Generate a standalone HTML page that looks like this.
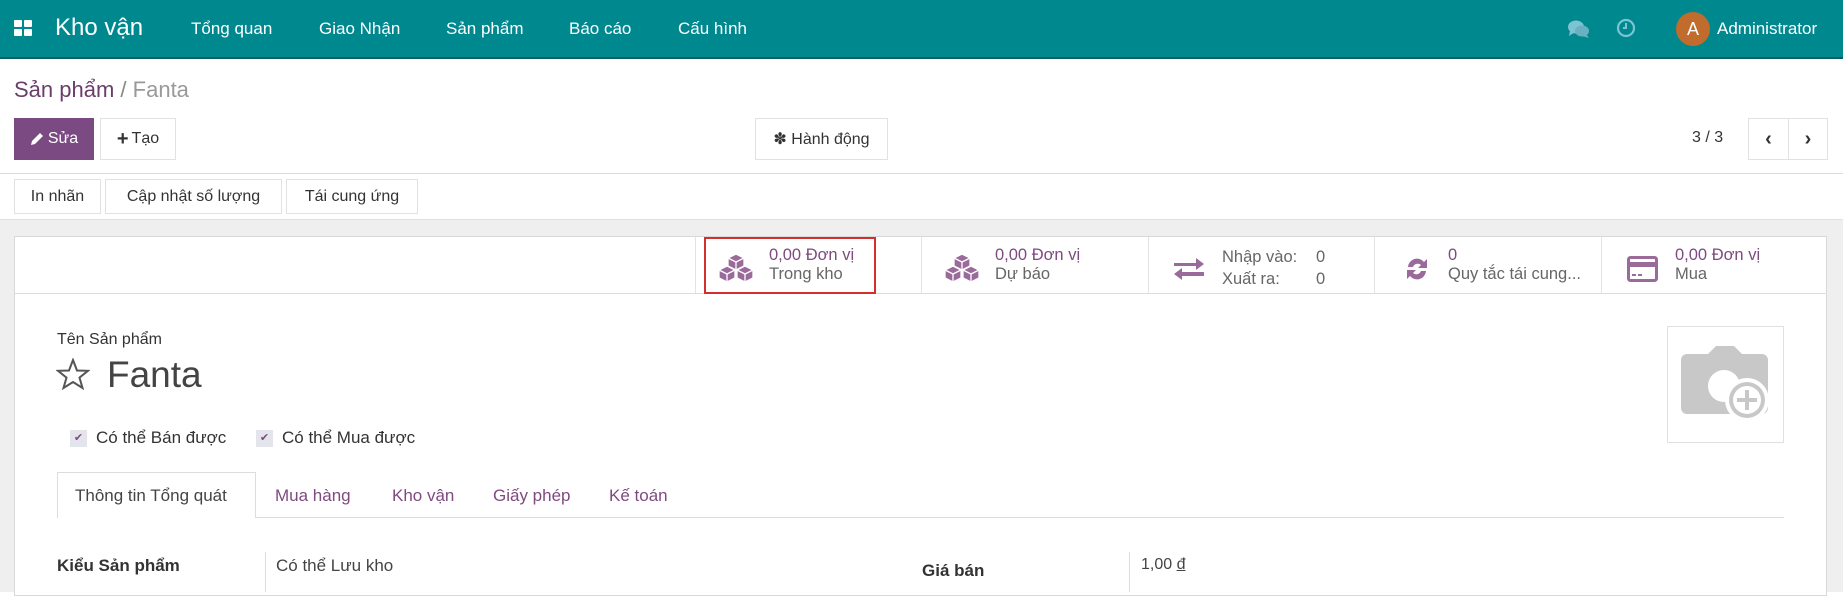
<!DOCTYPE html>
<html><head><meta charset="utf-8"><style>
*{box-sizing:border-box;margin:0;padding:0}
body{width:1843px;height:592px;overflow:hidden;background:#fff;font-family:"Liberation Sans",sans-serif;color:#4c4c4c;position:relative}
.a{position:absolute;white-space:nowrap}
.nav{position:absolute;left:0;top:0;width:1843px;height:59px;background:#00888f;border-bottom:2px solid #0a5e63}
.nav .a{color:#fff;font-size:17px;top:19px}
.btn{position:absolute;border:1px solid #e2e2e2;background:#fff;font-size:16px;color:#333;display:flex;align-items:center;justify-content:center}
.pur{color:#7e4a7f}
.st{font-size:16.5px;color:#666}
</style></head><body>
<div class="nav">
 <svg class="a" style="left:14px;top:20px" width="19" height="17" viewBox="0 0 19 17"><rect x="0" y="0" width="8" height="7" rx="1" fill="#fff"/><rect x="10" y="0" width="8" height="7" rx="1" fill="#fff"/><rect x="0" y="9" width="8" height="7" rx="1" fill="#fff"/><rect x="10" y="9" width="8" height="7" rx="1" fill="#fff"/></svg>
 <div class="a" style="left:55px;top:14px;font-size:24px">Kho vận</div>
 <div class="a" style="left:191px">Tổng quan</div>
 <div class="a" style="left:319px">Giao Nhận</div>
 <div class="a" style="left:446px">Sản phẩm</div>
 <div class="a" style="left:569px">Báo cáo</div>
 <div class="a" style="left:678px">Cấu hình</div>
 <svg class="a" style="left:1567px;top:19px" width="24" height="20" viewBox="0 0 24 20"><ellipse cx="9" cy="8" rx="8" ry="6.5" fill="#7cc3d3"/><path d="M3 12 L2 17 L8 13Z" fill="#7cc3d3"/><ellipse cx="15" cy="12" rx="7" ry="5.5" fill="#6bb0c0"/><path d="M19 15 L22 19 L15 17Z" fill="#6bb0c0"/></svg>
 <svg class="a" style="left:1616px;top:18px" width="20" height="20" viewBox="0 0 20 20"><circle cx="10" cy="10" r="8" fill="none" stroke="#7cc3d3" stroke-width="2.2"/><path d="M10 5 V10 H7" fill="none" stroke="#7cc3d3" stroke-width="2"/></svg>
 <div class="a" style="left:1676px;top:12px;width:34px;height:34px;border-radius:50%;background:#c16b2c;font-size:18px;text-align:center;line-height:34px;color:#fff">A</div>
 <div class="a" style="left:1717px">Administrator</div>
</div>
<div class="a pur" style="left:14px;top:77px;font-size:22px;color:#6b3e6a">Sản phẩm <span style="color:#888">/</span> <span style="color:#999">Fanta</span></div>
<div class="btn" style="left:14px;top:118px;width:80px;height:42px;background:#7c4a82;border-color:#7c4a82;color:#fff"><svg width="14" height="14" viewBox="0 0 14 14" style="margin-right:4px"><path d="M10 1 L13 4 L5 12 L1 13 L2 9Z" fill="#fff"/></svg>Sửa</div>
<div class="btn" style="left:100px;top:118px;width:76px;height:42px"><b style="font-size:20px;margin-right:3px">+</b>Tạo</div>
<div class="btn" style="left:755px;top:118px;width:133px;height:42px">✽ Hành động</div>
<div class="a" style="left:1692px;top:129px;font-size:16px;color:#333">3 / 3</div>
<div class="btn" style="left:1748px;top:118px;width:41px;height:42px;font-weight:bold;font-size:20px">‹</div>
<div class="btn" style="left:1788px;top:118px;width:40px;height:42px;font-weight:bold;font-size:20px">›</div>
<div class="a" style="left:0;top:173px;width:1843px;height:1px;background:#dcdcdc"></div>
<div class="btn" style="left:14px;top:179px;width:87px;height:35px">In nhãn</div>
<div class="btn" style="left:105px;top:179px;width:177px;height:35px">Cập nhật số lượng</div>
<div class="btn" style="left:286px;top:179px;width:132px;height:35px">Tái cung ứng</div>
<div class="a" style="left:0;top:219px;width:1843px;height:373px;background:#efefef;border-top:1px solid #e0e0e0"></div>
<div class="a" style="left:14px;top:236px;width:1813px;height:360px;background:#fff;border:1px solid #d8d8d8"></div>
<div class="a" style="left:14px;top:293px;width:1813px;height:1px;background:#ddd"></div>
<div class="a" style="left:695px;top:237px;width:1px;height:56px;background:#e3e3e3"></div>
<div class="a" style="left:921px;top:237px;width:1px;height:56px;background:#e3e3e3"></div>
<div class="a" style="left:1148px;top:237px;width:1px;height:56px;background:#e3e3e3"></div>
<div class="a" style="left:1374px;top:237px;width:1px;height:56px;background:#e3e3e3"></div>
<div class="a" style="left:1601px;top:237px;width:1px;height:56px;background:#e3e3e3"></div>
<div class="a" style="left:704px;top:237px;width:172px;height:57px;border:2px solid #d32f2f"></div>
<svg class="a" style="left:717px;top:253px" width="38" height="30" viewBox="0 0 38 30"><g fill="#9a6a9b" stroke="#fff" stroke-width="1.3" stroke-linejoin="round"><path d="M19 1 L27 5 L27 13 L19 17 L11 13 L11 5Z"/><path d="M11 5 L19 9 L27 5 M19 9 V17"/><path d="M10 13 L18 17 L18 25 L10 29 L2 25 L2 17Z"/><path d="M2 17 L10 21 L18 17 M10 21 V29"/><path d="M28 13 L36 17 L36 25 L28 29 L20 25 L20 17Z"/><path d="M20 17 L28 21 L36 17 M28 21 V29"/></g></svg>
<div class="a st" style="left:769px;top:246px"><span class="pur">0,00 Đơn vị</span><br>Trong kho</div>
<svg class="a" style="left:943px;top:253px" width="38" height="30" viewBox="0 0 38 30"><g fill="#9a6a9b" stroke="#fff" stroke-width="1.3" stroke-linejoin="round"><path d="M19 1 L27 5 L27 13 L19 17 L11 13 L11 5Z"/><path d="M11 5 L19 9 L27 5 M19 9 V17"/><path d="M10 13 L18 17 L18 25 L10 29 L2 25 L2 17Z"/><path d="M2 17 L10 21 L18 17 M10 21 V29"/><path d="M28 13 L36 17 L36 25 L28 29 L20 25 L20 17Z"/><path d="M20 17 L28 21 L36 17 M28 21 V29"/></g></svg>
<div class="a st" style="left:995px;top:246px"><span class="pur">0,00 Đơn vị</span><br>Dự báo</div>
<svg class="a" style="left:1174px;top:258px" width="30" height="22" viewBox="0 0 30 22"><path d="M0 5 H22 V0 L30 6 L22 12 V8 H0Z M30 14 H8 V10 L0 16 L8 22 V18 H30Z" fill="#9a6a9b"/></svg>
<div class="a st" style="left:1222px;top:246px;line-height:22px">Nhập vào:<br>Xuất ra:</div>
<div class="a st pur" style="left:1316px;top:246px;line-height:22px">0<br>0</div>
<svg class="a" style="left:1404px;top:255px" width="26" height="28" viewBox="0 0 26 28"><path d="M4 12 A9 9 0 0 1 20 7 L23 4 V13 H14 L17 10 A5 5 0 0 0 9 12Z M22 16 A9 9 0 0 1 6 21 L3 24 V15 H12 L9 18 A5 5 0 0 0 17 16Z" fill="#9a6a9b"/></svg>
<div class="a st" style="left:1448px;top:246px"><span class="pur">0</span><br>Quy tắc tái cung...</div>
<svg class="a" style="left:1627px;top:256px" width="31" height="26" viewBox="0 0 31 26"><rect x="1.5" y="1.5" width="28" height="23" rx="2" fill="none" stroke="#9a6a9b" stroke-width="3"/><rect x="1" y="6" width="29" height="5" fill="#9a6a9b"/><rect x="5" y="18" width="4" height="2" fill="#9a6a9b"/><rect x="11" y="18" width="4" height="2" fill="#9a6a9b"/></svg>
<div class="a st" style="left:1675px;top:246px"><span class="pur">0,00 Đơn vị</span><br>Mua</div>
<div class="a" style="left:57px;top:331px;font-size:16px;color:#333">Tên Sản phẩm</div>
<svg class="a" style="left:56px;top:358px" width="34" height="32" viewBox="0 0 34 32"><path d="M17 2 L21 12.5 L32 12.8 L23.5 19.6 L26.5 30 L17 24 L7.5 30 L10.5 19.6 L2 12.8 L13 12.5Z" fill="none" stroke="#555" stroke-width="2"/></svg>
<div class="a" style="left:107px;top:354px;font-size:37px;color:#444">Fanta</div>
<div class="a" style="left:70px;top:430px;width:17px;height:17px;background:#e4e4ec;font-size:11px;color:#7e4a7f;text-align:center;line-height:17px">✔</div>
<div class="a" style="left:96px;top:428px;font-size:17px;color:#333">Có thể Bán được</div>
<div class="a" style="left:256px;top:430px;width:17px;height:17px;background:#e4e4ec;font-size:11px;color:#7e4a7f;text-align:center;line-height:17px">✔</div>
<div class="a" style="left:282px;top:428px;font-size:17px;color:#333">Có thể Mua được</div>
<div class="a" style="left:57px;top:517px;width:1727px;height:1px;background:#ddd"></div>
<div class="a" style="left:57px;top:472px;width:199px;height:46px;border:1px solid #ddd;border-bottom:none;background:#fff"></div>
<div class="a" style="left:75px;top:486px;font-size:17px;color:#444">Thông tin Tổng quát</div>
<div class="a pur" style="left:275px;top:486px;font-size:17px">Mua hàng</div>
<div class="a pur" style="left:392px;top:486px;font-size:17px">Kho vận</div>
<div class="a pur" style="left:493px;top:486px;font-size:17px">Giấy phép</div>
<div class="a pur" style="left:609px;top:486px;font-size:17px">Kế toán</div>
<div class="a" style="left:57px;top:556px;font-size:17px;font-weight:bold;color:#333">Kiểu Sản phẩm</div>
<div class="a" style="left:265px;top:552px;width:1px;height:40px;background:#ddd"></div>
<div class="a" style="left:276px;top:556px;font-size:17px;color:#444">Có thể Lưu kho</div>
<div class="a" style="left:922px;top:561px;font-size:17px;font-weight:bold;color:#333">Giá bán</div>
<div class="a" style="left:1129px;top:552px;width:1px;height:40px;background:#ddd"></div>
<div class="a" style="left:1141px;top:556px;font-size:16px;color:#444">1,00 <u>đ</u></div>
<div class="a" style="left:1667px;top:326px;width:117px;height:117px;border:1px solid #e0e0e0"></div>
<svg class="a" style="left:1680px;top:346px" width="92" height="80" viewBox="0 0 92 80"><path d="M28 8 L36 0 H54 L62 8 H82 A6 6 0 0 1 88 14 V62 A6 6 0 0 1 82 68 H7 A6 6 0 0 1 1 62 V14 A6 6 0 0 1 7 8Z" fill="#c8c8c8"/><circle cx="44" cy="40" r="16" fill="#fff"/><circle cx="67" cy="54" r="22" fill="#fff"/><circle cx="67" cy="54" r="18" fill="#c8c8c8"/><circle cx="67" cy="54" r="14" fill="#fff"/><path d="M67 44 V64 M57 54 H77" stroke="#c8c8c8" stroke-width="4"/></svg>
</body></html>
